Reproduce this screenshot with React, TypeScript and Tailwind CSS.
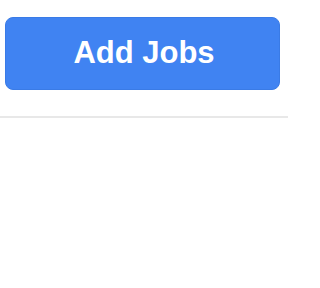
import React from 'react';

export default function App() {
  return (
    <div className="w-[288px] h-[288px] bg-white" style={{ fontFamily: '"Liberation Sans", Arial, sans-serif' }}>
      <div className="pt-[17px] pl-[5px] pr-[8px] pb-[26px] border-b-2 border-[#e8e8e8]">
        <button
          type="button"
          className="w-full h-[73px] rounded-lg bg-[#4083f2] border border-[#3a7be6] text-white text-[31px] font-bold flex items-center justify-center pl-[3px]"
        >
          Add Jobs
        </button>
      </div>
    </div>
  );
}
